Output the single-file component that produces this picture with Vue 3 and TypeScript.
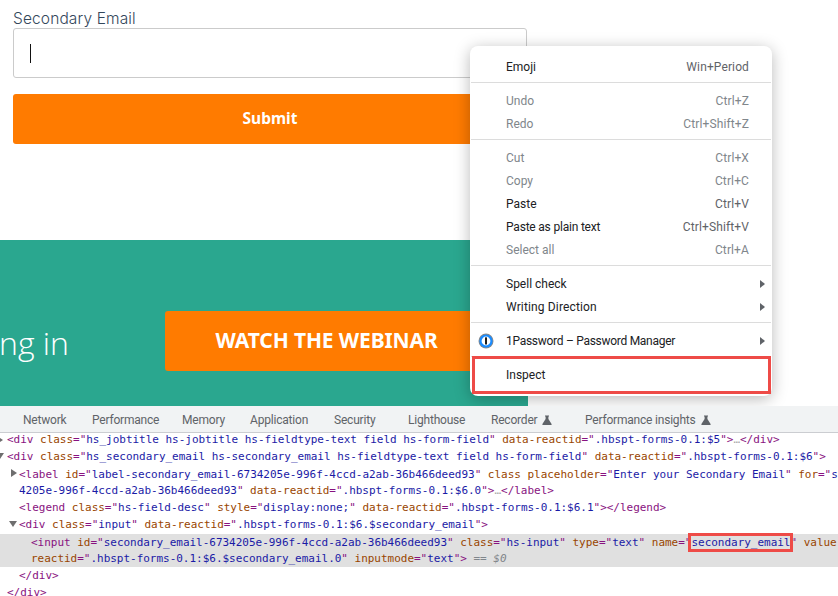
<script setup lang="ts">
interface MenuItem { label?: string; key?: string; off?: boolean; sub?: boolean; sep?: boolean; icon?: boolean; cls?: string; }
const items: MenuItem[] = [
  { label: 'Emoji', key: 'Win+Period' },
  { sep: true },
  { label: 'Undo', key: 'Ctrl+Z', off: true },
  { label: 'Redo', key: 'Ctrl+Shift+Z', off: true },
  { sep: true },
  { label: 'Cut', key: 'Ctrl+X', off: true },
  { label: 'Copy', key: 'Ctrl+C', off: true },
  { label: 'Paste', key: 'Ctrl+V' },
  { label: 'Paste as plain text', key: 'Ctrl+Shift+V', cls: 'tight' },
  { label: 'Select all', key: 'Ctrl+A', off: true },
  { sep: true },
  { label: 'Spell check', sub: true },
  { label: 'Writing Direction', sub: true, cls: 'loose' },
  { sep: true },
  { label: '1Password – Password Manager', sub: true, icon: true, cls: 'tighter' },
  { sep: true },
  { label: 'Inspect' },
];
</script>

<template>
  <div class="page">
    <div class="site">
      <form class="form" @submit.prevent>
        <label class="label">Secondary Email</label>
        <div class="input"><span class="caret"></span></div>
        <button class="submit" type="button">Submit</button>
      </form>
      <section class="banner">
        <span class="tail">ng in</span>
        <button class="watch" type="button">WATCH THE WEBINAR</button>
      </section>
    </div>

    <div class="menu">
      <template v-for="(it, i) in items" :key="i">
        <div v-if="it.sep" class="sep"></div>
        <div v-else class="row" :class="{ off: it.off, inspect: it.label === 'Inspect' }">
          <svg v-if="it.icon" class="op" viewBox="0 0 16 16" width="16" height="16">
            <circle cx="8" cy="8" r="7.5" fill="#8a8a8a" />
            <circle cx="8" cy="8" r="6.6" fill="#1a8cff" />
            <circle cx="8" cy="8" r="4.4" fill="#fff" />
            <rect x="7" y="4.2" width="2" height="7.4" rx="0.5" fill="#1c1c1c" />
          </svg>
          <span class="name" :class="it.cls">{{ it.label }}</span>
          <span v-if="it.key" class="key">{{ it.key }}</span>
          <span v-if="it.sub" class="arrow"></span>
        </div>
      </template>
    </div>

    <div class="devtools">
      <div class="tabs">
        <span class="tab">Network</span>
        <span class="tab">Performance</span>
        <span class="tab">Memory</span>
        <span class="tab">Application</span>
        <span class="tab">Security</span>
        <span class="tab">Lighthouse</span>
        <span class="tab">Recorder
          <svg class="flask" viewBox="0 0 10 10" width="10" height="10"><path d="M3 0.5h4v1H6.4v2.6L9.6 9a.7.7 0 0 1-.6 1H1a.7.7 0 0 1-.6-1L3.6 4.1V1.5H3z" fill="#5f6368" /></svg>
        </span>
        <span class="tab">Performance insights
          <svg class="flask" viewBox="0 0 10 10" width="10" height="10"><path d="M3 0.5h4v1H6.4v2.6L9.6 9a.7.7 0 0 1-.6 1H1a.7.7 0 0 1-.6-1L3.6 4.1V1.5H3z" fill="#5f6368" /></svg>
        </span>
      </div>
      <div class="tree">
        <div class="node first i0"><span class="tri right mini"></span><b>&lt;div</b> <i>class</i><b>="</b><u>hs_jobtitle hs-jobtitle hs-fieldtype-text field hs-form-field</u><b>"</b> <i>data-reactid</i><b>="</b><u>.hbspt-forms-0.1:$5</u><b>"&gt;</b>…<b>&lt;/div&gt;</b></div>
        <div class="node i0"><span class="tri down mini"></span><b>&lt;div</b> <i>class</i><b>="</b><u>hs_secondary_email hs-secondary_email hs-fieldtype-text field hs-form-field</u><b>"</b> <i>data-reactid</i><b>="</b><u>.hbspt-forms-0.1:$6</u><b>"&gt;</b></div>
        <div class="node wrap i1"><span class="tri right"></span><b>&lt;label</b> <i>id</i><b>="</b><u>label-secondary_email-6734205e-996f-4ccd-a2ab-36b466deed93</u><b>"</b> <i>class placeholder</i><b>="</b><u>Enter your Secondary Email</u><b>"</b> <i>for</i><b>="</b><u>se</u><br /><u>4205e-996f-4ccd-a2ab-36b466deed93</u><b>"</b> <i>data-reactid</i><b>="</b><u>.hbspt-forms-0.1:$6.0</u><b>"&gt;</b>…<b>&lt;/label&gt;</b></div>
        <div class="node i1"><b>&lt;legend</b> <i>class</i><b>="</b><u>hs-field-desc</u><b>"</b> <i>style</i><b>="</b><u>display:none;</u><b>"</b> <i>data-reactid</i><b>="</b><u>.hbspt-forms-0.1:$6.1</u><b>"&gt;&lt;/legend&gt;</b></div>
        <div class="node i1"><span class="tri down"></span><b>&lt;div</b> <i>class</i><b>="</b><u>input</u><b>"</b> <i>data-reactid</i><b>="</b><u>.hbspt-forms-0.1:$6.$secondary_email</u><b>"&gt;</b></div>
        <div class="node sel"><b>&lt;input</b> <i>id</i><b>="</b><u>secondary_email-6734205e-996f-4ccd-a2ab-36b466deed93</u><b>"</b> <i>class</i><b>="</b><u>hs-input</u><b>"</b> <i>type</i><b>="</b><u>text</u><b>"</b> <i>name</i><b>="</b><u class="boxed">secondary_email</u><b>"</b> <i>value</i><br /><i>reactid</i><b>="</b><u>.hbspt-forms-0.1:$6.$secondary_email.0</u><b>"</b> <i>inputmode</i><b>="</b><u>text</u><b>"&gt;</b> <em>== $0</em></div>
        <div class="node i1"><b>&lt;/div&gt;</b></div>
        <div class="node i0"><b>&lt;/div&gt;</b></div>
      </div>
    </div>
  </div>
</template>

<style scoped>
.page {
  position: relative;
  width: 838px;
  height: 596px;
  overflow: hidden;
  background: #fff;
  font-family: "Inter", "Liberation Sans", sans-serif;
}
.site {
  width: 528px;
  height: 406px;
  overflow: hidden;
}
.form {
  display: flex;
  flex-direction: column;
  padding: 10px 1px 0 13px;
  height: 240px;
  box-sizing: border-box;
}
.label {
  height: 18px;
  line-height: 18px;
  font-size: 15.5px;
  font-weight: 300;
  letter-spacing: 0.13px;
  color: #33475b;
}
.input {
  height: 50px;
  box-sizing: border-box;
  border: 1px solid #cbcbcb;
  border-radius: 3px;
  padding: 15px 0 0 16px;
}
.caret {
  display: block;
  width: 1px;
  height: 19px;
  background: #111;
}
.submit {
  margin-top: 16px;
  height: 50px;
  border: 0;
  border-radius: 3px;
  background: #ff7b00;
  color: #fff;
  font-family: "Noto Sans", sans-serif;
  font-size: 15.5px;
  font-weight: 700;
  padding: 0 0 2px;
}
.banner {
  position: relative;
  height: 166px;
  background: #2aa78f;
  display: flex;
  padding: 71px 0 0 165px;
  box-sizing: border-box;
}
.tail {
  position: absolute;
  left: -1px;
  top: 83px;
  font-family: "Open Sans", sans-serif;
  font-size: 32px;
  font-weight: 300;
  line-height: 40px;
  color: #fff;
}
.watch {
  width: 323px;
  height: 60px;
  border: 0;
  border-radius: 3px;
  background: #ff7b00;
  color: #fff;
  font-family: "Noto Sans", sans-serif;
  font-size: 21px;
  font-weight: 700;
  letter-spacing: -0.12px;
  padding: 0 0 3px;
}
.menu {
  position: absolute;
  z-index: 1;
  left: 470px;
  top: 46px;
  width: 302px;
  height: 350px;
  box-sizing: border-box;
  padding-top: 9.5px;
  background: #fff;
  border-radius: 8px;
  box-shadow: 0 3px 16px rgba(0, 0, 0, 0.28);
  font-family: "Roboto", sans-serif;
  font-size: 12px;
  color: #202124;
}
.row {
  position: relative;
  display: flex;
  align-items: center;
  justify-content: space-between;
  height: 23px;
  padding: 0 23px 0 36px;
}
.row.off {
  color: #80868b;
}
.tight {
  letter-spacing: -0.2px;
}
.tighter {
  letter-spacing: -0.28px;
}
.loose {
  letter-spacing: 0.14px;
}
.key {
  color: #5f6368;
  letter-spacing: 0.12px;
}
.row.off .key {
  color: #80868b;
}
.sep {
  height: 1px;
  margin: 3.5px 1px 6.5px;
  background: #dcdcdc;
}
.op {
  position: absolute;
  left: 8px;
  top: 3.5px;
}
.arrow {
  position: absolute;
  right: 7px;
  top: 7.5px;
  border-left: 5px solid #5f6368;
  border-top: 4px solid transparent;
  border-bottom: 4px solid transparent;
}
.inspect::after {
  content: "";
  position: absolute;
  left: 2px;
  right: 1px;
  top: -7.5px;
  bottom: -7px;
  border: 3px solid #ee4b47;
}
.devtools {
  position: relative;
  z-index: 2;
  height: 190px;
  background: #fff;
}
.tabs {
  display: grid;
  grid-template-columns: 69px 90px 68px 84px 74px 83px 94px auto;
  align-items: center;
  height: 27px;
  box-sizing: border-box;
  padding: 1px 0 0 23px;
  background: #f1f3f4;
  border-bottom: 1px solid #cbcdd1;
  font-family: "Roboto", sans-serif;
  font-size: 12px;
  letter-spacing: -0.2px;
  color: #5f6368;
}
.tab {
  white-space: nowrap;
  display: flex;
  align-items: center;
  gap: 5px;
}
.tree {
  font-family: "DejaVu Sans Mono", monospace;
  font-size: 11px;
  line-height: 16px;
  letter-spacing: -0.02px;
  white-space: nowrap;
  color: #a8a8a8;
}
.node {
  position: relative;
  padding-top: 1px;
  height: 16px;
}
.node.first {
  padding-top: 0;
  height: 15px;
  line-height: 14px;
}
.node.wrap {
  padding-top: 2px;
  height: 32px;
}
.i0 {
  padding-left: 7px;
}
.i1 {
  padding-left: 19px;
}
.sel {
  margin-top: 1px;
  height: 32px;
  padding-left: 31px;
  background: #e0e0e0;
}
.node b {
  font-weight: 400;
  color: #881280;
}
.node i {
  font-style: normal;
  color: #994500;
}
.node u {
  text-decoration: none;
  color: #1a1aa6;
}
.node em {
  font-style: italic;
  color: #80868b;
}
.boxed {
  outline: 3px solid #ee4b47;
  outline-offset: 0;
}
.tri {
  position: absolute;
  left: 11px;
  top: 4px;
}
.tri.right.mini {
  left: -3px;
  top: 3px;
}
.tri.down.mini {
  left: -4px;
}
.tri.right {
  border-left: 6px solid #6e6e6e;
  border-top: 4px solid transparent;
  border-bottom: 4px solid transparent;
}
.tri.down {
  left: 9px;
  top: 5px;
  border-top: 6px solid #6e6e6e;
  border-left: 4px solid transparent;
  border-right: 4px solid transparent;
}
</style>
